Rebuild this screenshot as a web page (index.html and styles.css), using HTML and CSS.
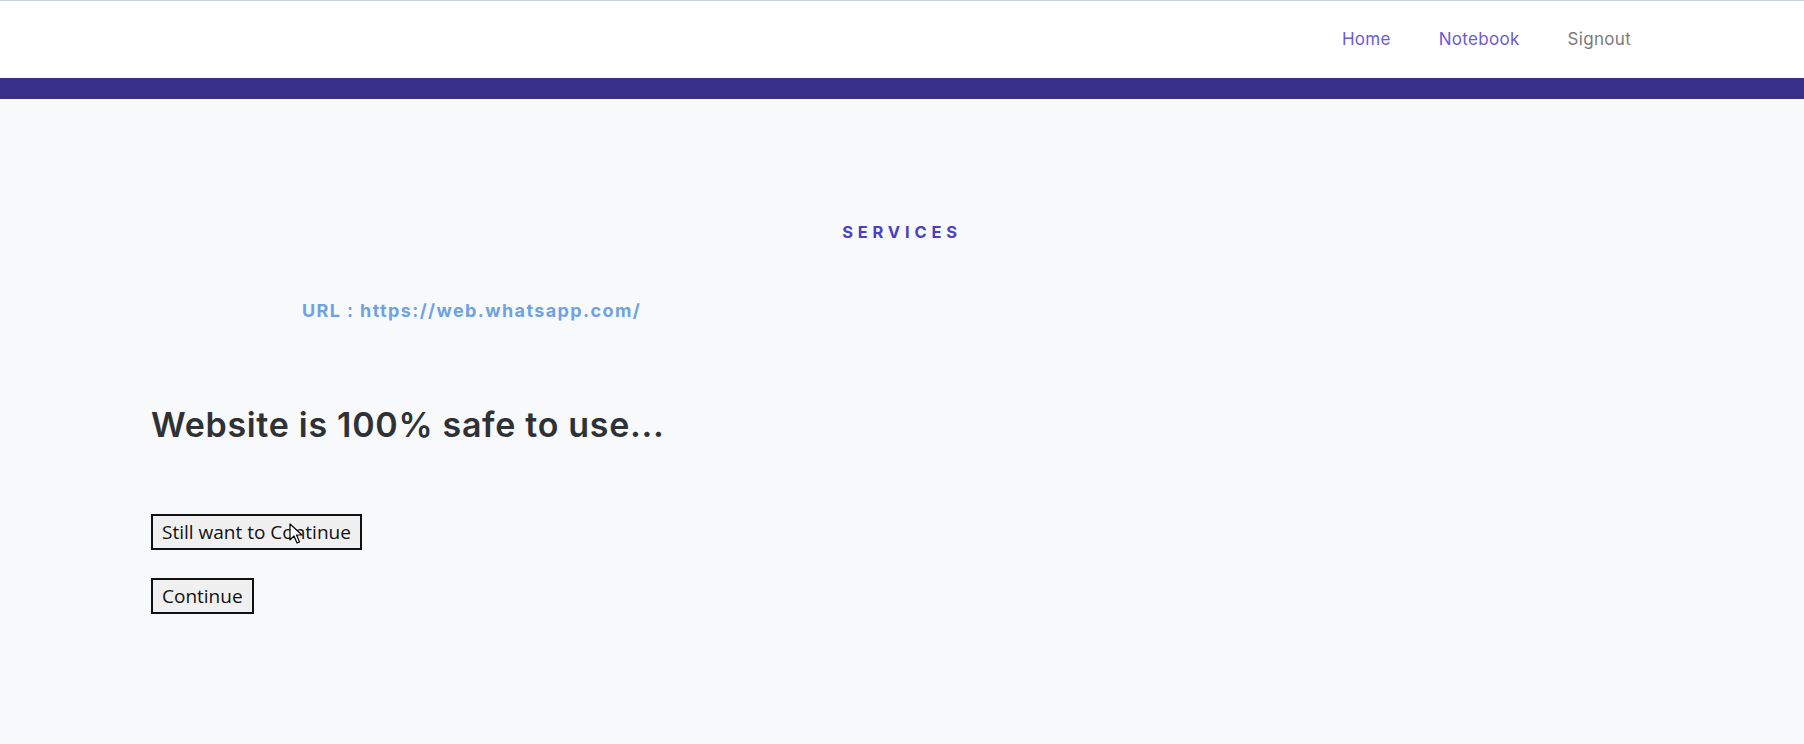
FILE: index.html
```html
<!DOCTYPE html>
<html>
<head>
<meta charset="utf-8">
<link rel="stylesheet" href="styles.css">
</head>
<body>
<header class="topbar">
  <nav class="nav">
    <a class="nav-link purple" href="#">Home</a>
    <a class="nav-link purple" href="#">Notebook</a>
    <a class="nav-link gray" href="#">Signout</a>
  </nav>
</header>
<div class="band"></div>
<main class="main">
  <h3 class="section-title">SERVICES</h3>
  <p class="url">URL : https://web.whatsapp.com/</p>
  <h1 class="verdict">Website is 100% safe to use...</h1>
  <div class="actions">
    <div class="btn-wrap">
      <button class="btn">Still want to Continue</button>
      <svg class="cursor" width="14" height="22" viewBox="0 0 14 22"><path d="M1 1 L1 17 L5 13 L8 20 L10.5 19 L7.5 12 L13 12 Z" fill="#fff" stroke="#000" stroke-width="1.2" stroke-linejoin="round"/></svg>
    </div>
    <div class="btn-wrap">
      <button class="btn">Continue</button>
    </div>
  </div>
</main>
</body>
</html>
```
FILE: styles.css
```css
* { box-sizing: border-box; }
html, body { margin: 0; padding: 0; }
body {
  background: #f8f9fa;
  font-family: "Inter", "Liberation Sans", sans-serif;
  height: 744px;
  overflow: hidden;
}
.topbar {
  height: 78px;
  background: #ffffff;
  border-top: 1px solid #c9d2de;
  display: flex;
  align-items: center;
  justify-content: flex-end;
  padding-right: 173px;
  padding-bottom: 2px;
}
.nav {
  display: flex;
  gap: 48px;
}
.nav-link {
  text-decoration: none;
  font-size: 17px;
  letter-spacing: 0.3px;
}
.purple { color: #6b5bd6; }
.gray { color: #7a7a7a; }
.band {
  height: 21px;
  background: #372f8a;
}
.main {
  padding: 0 0 0 151px;
}
.section-title {
  margin: 123px 0 0 -151px;
  text-align: center;
  font-size: 16.5px;
  font-weight: 700;
  letter-spacing: 4.8px;
  color: #4b3fc4;
  line-height: 20px;
}
.url {
  margin: 58px 0 0 151px;
  font-size: 18px;
  font-weight: 700;
  color: #6ea2e2;
  line-height: 22px;
  letter-spacing: 1.4px;
}
.verdict {
  margin: 83px 0 0 0;
  font-size: 34px;
  font-weight: 600;
  color: #2e3237;
  line-height: 40px;
  letter-spacing: 0.7px;
}
.actions {
  margin-top: 69px;
  display: flex;
  flex-direction: column;
  align-items: flex-start;
  gap: 28px;
}
.btn-wrap { position: relative; }
.btn {
  font-family: "Open Sans", "Noto Sans", sans-serif;
  font-size: 19px;
  color: #111;
  background: #f0f0f0;
  border: 2px solid #111;
  padding: 4px 9px 4px;
  height: 36px;
  line-height: 24px;
}
.cursor {
  position: absolute;
  left: 138px;
  top: 9px;
}
```
